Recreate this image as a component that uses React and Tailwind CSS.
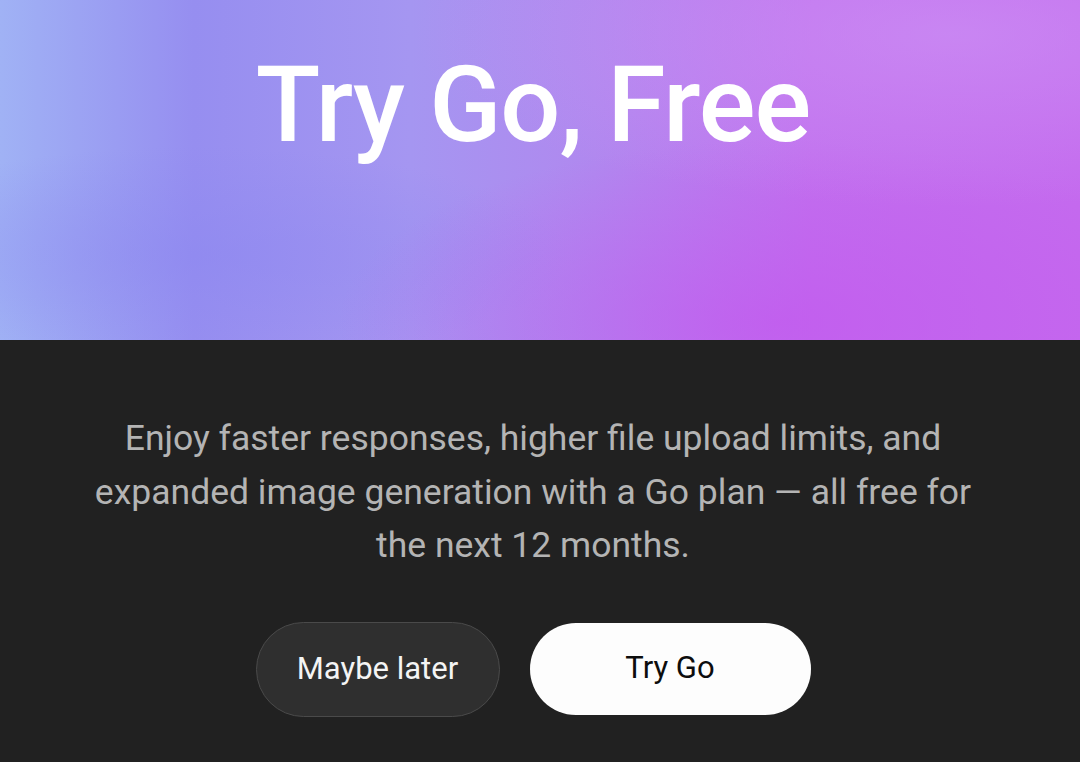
import React from 'react';

const App = () => {
  return (
    <div className="w-[1080px] h-[762px] overflow-hidden bg-[#212121] font-['Roboto',sans-serif]">
      {/* Hero gradient */}
      <div className="relative h-[340px] bg-[linear-gradient(90deg,#a0b2f5_0%,#968ef0_18%,#a596f1_38%,#b088ef_55%,#c170ee_75%,#c46aee_100%)] overflow-hidden">
        <div className="absolute inset-0 bg-[radial-gradient(ellipse_at_88%_10%,rgba(205,150,245,0.6),transparent_40%),radial-gradient(ellipse_at_72%_95%,rgba(195,85,238,0.65),transparent_40%),radial-gradient(ellipse_at_18%_75%,rgba(140,135,240,0.5),transparent_30%)]" />
        <h1 className="relative pt-[43px] pr-[14px] text-center text-[106px] leading-[125px] font-medium tracking-[-0.01em] text-white">
          Try Go, Free
        </h1>
      </div>

      {/* Body */}
      <div className="flex flex-col items-center pt-[72px] pr-[14px]">
        <p className="text-center text-[35.5px] leading-[53.5px] text-[#b4b4b4]">
          Enjoy faster responses, higher file upload limits, and
          <br />
          expanded image generation with a Go plan — all free for
          <br />
          the next 12 months.
        </p>
        <div className="flex gap-[30px] mt-[49px]">
          <button className="w-[244px] h-[95px] rounded-full bg-[#2f2f2f] border border-[#4a4a4a] text-[#f4f4f4] text-[31px] font-normal">
            Maybe later
          </button>
          <button className="w-[281px] h-[92px] mt-[1px] rounded-full bg-[#fdfdfd] text-[#0d0d0d] text-[31px] font-normal">
            Try Go
          </button>
        </div>
      </div>
    </div>
  );
};

export default App;
